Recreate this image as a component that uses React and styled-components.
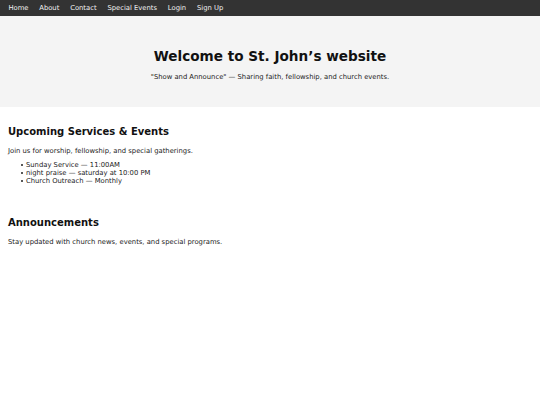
import React from 'react';
import styled, { createGlobalStyle } from 'styled-components';

const GlobalStyle = createGlobalStyle`
  html, body {
    margin: 0;
    padding: 0;
    background: #fff;
  }
  body {
    font-family: 'DejaVu Sans', Verdana, sans-serif;
    font-size: 6.8px;
    color: #222;
  }
`;

const Nav = styled.nav`
  display: flex;
  align-items: center;
  height: 16px;
  padding: 0 3px;
  background: #333;
  a {
    color: #f2f2f2;
    text-decoration: none;
    padding: 0 5.4px;
    line-height: 16px;
  }
`;

const Hero = styled.header`
  background: #f4f4f4;
  text-align: center;
  padding: 32px 20px 26px;
  h1 {
    font-size: 13.6px;
    line-height: 16px;
    margin: 0 0 9px;
    color: #111;
  }
  p {
    margin: 0;
    line-height: 8px;
  }
`;

const Section = styled.section`
  padding: 0 8px;
  margin-top: ${(p) => p.top}px;
  h2 {
    font-size: 10px;
    line-height: 12px;
    margin: 0 0 9px;
    color: #111;
  }
  p {
    margin: 0;
    line-height: 8px;
  }
`;

const List = styled.ul`
  margin: 6px 0 0;
  padding-left: 13px;
  list-style: none;
  line-height: 8px;
`;

const Item = styled.li`
  &::before {
    content: '';
    display: inline-block;
    width: 2px;
    height: 2px;
    border-radius: 50%;
    background: #222;
    margin-right: 3px;
    vertical-align: middle;
  }
`;

const App = () => (
  <>
    <GlobalStyle />
    <Nav>
      <a href="#">Home</a>
      <a href="#">About</a>
      <a href="#">Contact</a>
      <a href="#">Special Events</a>
      <a href="#">Login</a>
      <a href="#">Sign Up</a>
    </Nav>
    <Hero>
      <h1>Welcome to St. John’s website</h1>
      <p>"Show and Announce" — Sharing faith, fellowship, and church events.</p>
    </Hero>
    <Section top={19}>
      <h2>Upcoming Services &amp; Events</h2>
      <p>Join us for worship, fellowship, and special gatherings.</p>
      <List>
        <Item>Sunday Service — 11:00AM</Item>
        <Item>night praise — saturday at 10:00 PM</Item>
        <Item>Church Outreach — Monthly</Item>
      </List>
    </Section>
    <Section top={32}>
      <h2>Announcements</h2>
      <p>Stay updated with church news, events, and special programs.</p>
    </Section>
  </>
);

export default App;
